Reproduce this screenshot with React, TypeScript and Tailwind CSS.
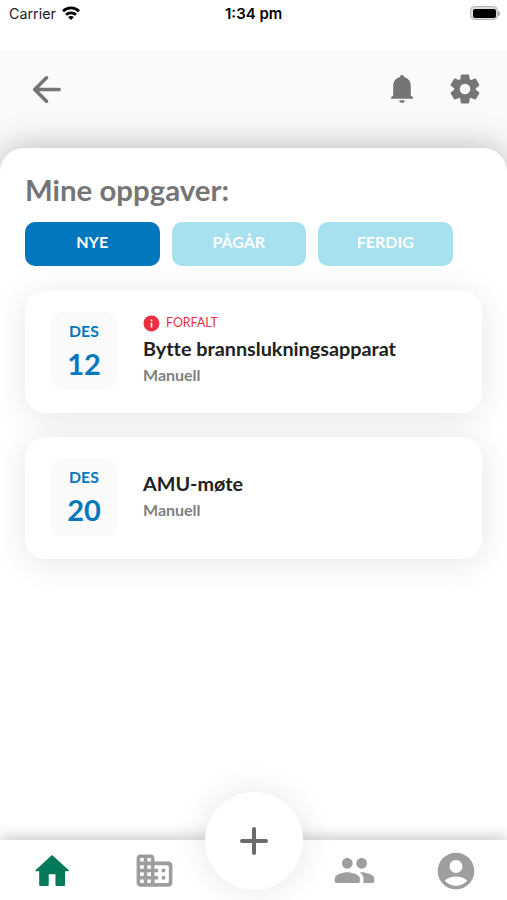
import type { ReactNode } from "react";
import { MdAccountCircle, MdInfo } from "react-icons/md";

const Icon = ({ children, className }: { children: ReactNode; className?: string }) => (
  <svg viewBox="0 0 24 24" fill="currentColor" className={className}>
    {children}
  </svg>
);

const StatusBar = () => {
  return (
    <div className="h-[50px] pl-[9px] pr-[7px] pt-[4px] flex items-start font-['Inter',sans-serif] text-black">
      <div className="flex items-center h-5 w-[216px]">
        <span className="text-[14.3px] text-[#222]">Carrier</span>
        <svg viewBox="0 0 18 14" className="w-[18px] h-[14px] ml-[6px] mb-[3px]" fill="none" stroke="black" strokeWidth="2.8">
          <path d="M1 5.2a11.5 11.5 0 0 1 16 0" />
          <path d="M4 8.8a7.2 7.2 0 0 1 10 0" />
          <path d="M9 14 6.2 11.2a3.9 3.9 0 0 1 5.6 0z" fill="black" stroke="none" />
        </svg>
      </div>
      <div className="h-5 flex items-center text-[15px] font-semibold">1:34 pm</div>
      <div className="h-[18px] flex items-center ml-auto">
        <div className="w-[28px] h-[14px] rounded-[4.5px] border border-[#b4b4b4] bg-[#dedede] p-[1.5px]">
          <div className="h-full rounded-[2px] bg-black"></div>
        </div>
        <div className="w-[2px] h-[5px] rounded-r bg-[#b0b0b0]"></div>
      </div>
    </div>
  );
};

const Header = () => {
  return (
    <div className="h-[98px] bg-[#fafafa] text-[#757575] flex items-start pl-[25px] pr-[24px] pt-[17px]">
      <Icon className="w-[43px] h-[43px] mt-px">
        <path d="M19 11H7.83l4.88-4.88c.39-.39.39-1.03 0-1.42-.39-.39-1.02-.39-1.41 0l-6.59 6.59c-.39.39-.39 1.02 0 1.41l6.59 6.59c.39.39 1.02.39 1.41 0 .39-.39.39-1.02 0-1.41L7.83 13H19c.55 0 1-.45 1-1s-.45-1-1-1z" />
      </Icon>
      <div className="ml-auto h-[43px] flex items-center gap-[28px] pt-px">
        <svg viewBox="0 0 34 34" className="w-[34px] h-[34px]" fill="currentColor">
          <path d="M17 3c1.2 0 2 .8 2.1 1.9 4 1.1 6.7 4.4 6.7 8.7v9.8l1.9 1.5c.8.8.4 1.9-.7 1.9H7c-1.1 0-1.5-1.1-.7-1.9l1.9-1.5v-9.8c0-4.3 2.7-7.6 6.7-8.7.1-1.1.9-1.9 2.1-1.9z" />
          <path d="M14.2 28.2h5.6c0 1.7-1.2 2.6-2.8 2.6s-2.8-.9-2.8-2.6z" />
        </svg>
        <svg viewBox="-18 -18 36 36" className="w-[36px] h-[36px]" fill="currentColor">
          <path fillRule="evenodd" d="M0-10.7a10.7 10.7 0 1 0 0 21.4 10.7 10.7 0 1 0 0-21.4zM0-5.3a5.3 5.3 0 1 1 0 10.6 5.3 5.3 0 1 1 0-10.6z" />
          {[0, 60, 120, 180, 240, 300].map((angle) => (
            <path key={angle} transform={`rotate(${angle})`} d="M-3.2-14.6h6.4q.8 0 .9.8l.9 5.3h-10l.9-5.3q.1-.8.9-.8z" />
          ))}
        </svg>
      </div>
    </div>
  );
};

const Tab = ({ label, active }: { label: string; active?: boolean }) => (
  <button
    className={`w-[134.5px] h-[44px] rounded-[10px] pb-[4px] text-white text-[16px] font-bold ${
      active ? "bg-[#0277bd]" : "bg-[#a7e0ee]"
    }`}
  >
    {label}
  </button>
);

interface TaskProps {
  day: string;
  title: string;
  overdue?: boolean;
}

const TaskCard = ({ day, title, overdue }: TaskProps) => {
  return (
    <div className="h-[122px] bg-white rounded-[20px] shadow-[0_4px_34px_rgba(0,0,0,0.1)] flex items-center pl-[25px]">
      <div className="w-[68px] h-[78px] rounded-[15px] bg-[#fafafa] text-[#0277bd] font-bold flex flex-col items-center pt-[8px] -mt-[2px]">
        <span className="text-[15.8px] leading-[22px]">DES</span>
        <span className="text-[29px] leading-[44px]">{day}</span>
      </div>
      <div className={`ml-[25px] ${overdue ? "-mt-[3px]" : "-mt-[8px]"}`}>
        {overdue && (
          <div className="flex items-center h-[18px] text-[#eb2f41] text-[12.4px]">
            <MdInfo className="w-[19px] h-[19px] -ml-px mr-[5px]" />
            <span className="pt-px">FORFALT</span>
          </div>
        )}
        <div className="text-[19.8px] leading-[27px] mt-[3px] font-bold text-[#212121] [font-variant-ligatures:none]">{title}</div>
        <div className="text-[16px] leading-[25px] font-bold text-[#808080]">Manuell</div>
      </div>
    </div>
  );
};

const BottomNav = () => {
  return (
    <div className="relative h-[60px] bg-white shadow-[0_-3px_14px_rgba(0,0,0,0.22)] text-[#9e9e9e]">
      <div className="absolute left-[205px] -top-[48px] w-[98px] h-[98px] rounded-full bg-white shadow-[0_0_34px_rgba(0,0,0,0.1)] flex items-center justify-center">
        <svg viewBox="0 0 28 28" className="w-[28px] h-[28px]" stroke="#6b6b6b" strokeWidth="4" strokeLinecap="round">
          <path d="M14 2v24M2 14h24" />
        </svg>
      </div>
      <div className="flex justify-between pl-[30px] pr-[29px] pt-[9px]">
        <Icon className="w-[44px] h-[44px] text-[#057a5b]">
          <path d="M10.2 19.6v-5.8h3.7v5.8c0 .4.3.6.6.6h4c.4 0 .6-.2.6-.6v-7.5h1.7c.4 0 .5-.4.2-.7L12.4 3.5c-.2-.2-.5-.2-.7 0l-8.6 7.9c-.3.3-.2.7.2.7H5v7.5c0 .4.2.6.6.6h4c.3 0 .6-.2.6-.6z" />
        </Icon>
        <Icon className="w-[43px] h-[43px] mr-[55px] ml-px">
          <path d="M12 7V5c0-1.1-.9-2-2-2H4c-1.1 0-2 .9-2 2v14c0 1.1.9 2 2 2h16c1.1 0 2-.9 2-2V9c0-1.1-.9-2-2-2h-8zM6 19H4v-2h2v2zm0-4H4v-2h2v2zm0-4H4V9h2v2zm0-4H4V5h2v2zm4 12H8v-2h2v2zm0-4H8v-2h2v2zm0-4H8V9h2v2zm0-4H8V5h2v2zm9 12h-7v-2h2v-2h-2v-2h2v-2h-2V9h7c.55 0 1 .45 1 1v8c0 .55-.45 1-1 1zm-1-8h-2v2h2v-2zm0 4h-2v2h2v-2z" />
        </Icon>
        <Icon className="w-[43px] h-[43px] ml-[43px]">
          <path d="M16 11c1.66 0 2.99-1.34 2.99-3S17.66 5 16 5s-3 1.34-3 3 1.34 3 3 3zm-8 0c1.66 0 2.99-1.34 2.99-3S9.66 5 8 5 5 6.34 5 8s1.34 3 3 3zm0 2c-2.33 0-7 1.17-7 3.5V18c0 .55.45 1 1 1h12c.55 0 1-.45 1-1v-1.5c0-2.33-4.67-3.5-7-3.5zm8 0c-.29 0-.62.02-.97.05.02.01.03.03.04.04 1.14.83 1.93 1.94 1.93 3.41V18c0 .35-.07.69-.18 1H22c.55 0 1-.45 1-1v-1.5c0-2.33-4.67-3.5-7-3.5z" />
        </Icon>
        <MdAccountCircle className="w-[44px] h-[44px]" />
      </div>
    </div>
  );
};

const App = () => {
  return (
    <div className="w-[507px] h-[900px] bg-white overflow-hidden flex flex-col font-['Lato',sans-serif]">
      <StatusBar />
      <div className="flex-1 bg-[#fafafa] flex flex-col overflow-hidden">
        <Header />
        <div className="flex-1 bg-white rounded-t-[24px] shadow-[0_0_34px_rgba(0,0,0,0.28)] px-[25px] pt-[24px]">
          <h1 className="text-[29.4px] leading-[36px] font-bold text-[#757575]">Mine oppgaver:</h1>
          <div className="flex gap-[12px] mt-[14px]">
            <Tab label="NYE" active />
            <Tab label="PÅGÅR" />
            <Tab label="FERDIG" />
          </div>
          <div className="mt-[25px] flex flex-col gap-[24.4px]">
            <TaskCard day="12" title="Bytte brannslukningsapparat" overdue />
            <TaskCard day="20" title="AMU-møte" />
          </div>
        </div>
        <BottomNav />
      </div>
    </div>
  );
};

export default App;
